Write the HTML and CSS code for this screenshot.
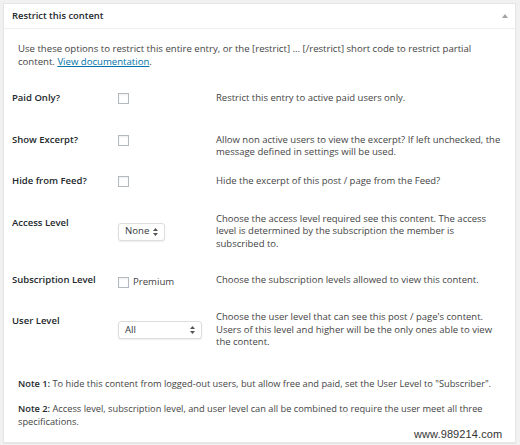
FILE: index.html
```html
<!DOCTYPE html>
<html>
<head>
<meta charset="utf-8">
<link rel="stylesheet" href="styles.css">
</head>
<body>
<div class="panel">
  <div class="panel-head">
    <h2 class="panel-title">Restrict this content</h2>
    <svg class="toggle" width="6" height="4" viewBox="0 0 6 4"><path d="M0 4 L3 0 L6 4 Z" fill="#a0a5aa"/></svg>
  </div>
  <div class="panel-body">
    <p class="intro">Use these options to restrict this entire entry, or the [restrict] ... [/restrict] short code to restrict partial content. <a href="#">View documentation</a>.</p>
    <div class="rows">
      <div class="row">
        <div class="label">Paid Only?</div>
        <div class="control"><span class="checkbox"></span></div>
        <div class="desc">Restrict this entry to active paid users only.</div>
      </div>
      <div class="row">
        <div class="label">Show Excerpt?</div>
        <div class="control"><span class="checkbox"></span></div>
        <div class="desc">Allow non active users to view the excerpt? If left unchecked, the message defined in settings will be used.</div>
      </div>
      <div class="row">
        <div class="label">Hide from Feed?</div>
        <div class="control"><span class="checkbox"></span></div>
        <div class="desc">Hide the excerpt of this post / page from the Feed?</div>
      </div>
      <div class="row row-select">
        <div class="label">Access Level</div>
        <div class="control"><div class="select select-none"><span>None</span><svg class="arrows" width="5" height="8" viewBox="0 0 5 8"><path d="M0 3 L2.5 0 L5 3 Z M0 5 L2.5 8 L5 5 Z" fill="#555"/></svg></div></div>
        <div class="desc desc-narrow">Choose the access level required see this content. The access level is determined by the subscription the member is subscribed to.</div>
      </div>
      <div class="row">
        <div class="label">Subscription Level</div>
        <div class="control control-inline"><span class="checkbox"></span><span class="opt">Premium</span></div>
        <div class="desc">Choose the subscription levels allowed to view this content.</div>
      </div>
      <div class="row row-select">
        <div class="label">User Level</div>
        <div class="control"><div class="select select-all"><span>All</span><svg class="arrows" width="5" height="8" viewBox="0 0 5 8"><path d="M0 3 L2.5 0 L5 3 Z M0 5 L2.5 8 L5 5 Z" fill="#555"/></svg></div></div>
        <div class="desc">Choose the user level that can see this post / page's content. Users of this level and higher will be the only ones able to view the content.</div>
      </div>
    </div>
    <p class="note"><strong>Note 1:</strong> To hide this content from logged-out users, but allow free and paid, set the User Level to "Subscriber".</p>
    <p class="note"><strong>Note 2:</strong> Access level, subscription level, and user level can all be combined to require the user meet all three specifications.</p>
  </div>
</div>
<div class="watermark">www.989214.com</div>
</body>
</html>
```
FILE: styles.css
```css
html, body {
  margin: 0;
  padding: 0;
}
body {
  background: #f1f1f1;
  font-family: "Open Sans", "Liberation Sans", sans-serif;
  font-size: 9.6px;
  line-height: 12.5px;
  color: #444;
  width: 520px;
  height: 445px;
  overflow: hidden;
  position: relative;
}
.panel {
  margin: 3px 4px 0 3px;
  height: 438px;
  background: #fff;
  border: 1px solid #e5e5e5;
  box-shadow: 0 1px 1px rgba(0,0,0,0.04);
}
.panel-head {
  height: 24px;
  border-bottom: 1px solid #eee;
  display: flex;
  align-items: center;
  justify-content: space-between;
  padding: 0 7px 0 8px;
}
.panel-title {
  margin: 0;
  font-size: 9.4px;
  font-weight: 600;
  color: #23282d;
}
.toggle {
  display: block;
  margin-top: -1px;
}
.panel-body {
  padding: 0 9px 0 0;
}
.intro {
  margin: 14px 4px 0 14px;
}
.intro a {
  color: #0073aa;
  text-decoration: underline;
}
.rows {
  margin-top: 24px;
  padding-left: 8px;
}
.row {
  display: grid;
  grid-template-columns: 106px 98px 1fr;
  align-items: start;
}
.label {
  font-weight: 600;
  font-size: 9.5px;
  color: #23282d;
  padding-bottom: 29px;
}
.control {
  padding-top: 1px;
}
.control-inline {
  display: flex;
  align-items: center;
  gap: 4px;
  padding-top: 3px;
}
.checkbox {
  display: block;
  width: 9px;
  height: 9px;
  border: 1px solid #b4b9be;
  background: #fff;
  box-shadow: inset 0 1px 2px rgba(0,0,0,0.07);
}
.opt {
  line-height: 10px;
}
.desc {
  font-size: 9.5px;
  padding-top: 0;
  padding-bottom: 15px;
}
.desc-narrow {
  padding-right: 17px;
}
.row-select .label {
  padding-bottom: 0;
}
.row-select .control {
  padding-top: 6px;
}
.row-select .desc {
  margin-top: -4px;
  padding-bottom: 23.5px;
}
.select {
  box-sizing: border-box;
  height: 18px;
  border: 1px solid #ddd;
  border-radius: 3px;
  background: #fff;
  box-shadow: 0 1px 2px rgba(0,0,0,0.07);
  display: flex;
  align-items: center;
  justify-content: space-between;
  padding: 0 6px 0 6px;
  color: #32373c;
}
.select-none {
  width: 47px;
}
.select-all {
  width: 84px;
}
.arrows {
  display: block;
}
.note {
  margin: 5px 4px 11px 14px;
  font-size: 9.25px;
  line-height: 13.5px;
}
.note strong {
  font-weight: 600;
  color: #23282d;
}
.watermark {
  position: absolute;
  left: 414px;
  top: 428px;
  font-family: "Liberation Sans", Arial, sans-serif;
  font-size: 11px;
  color: #333;
  letter-spacing: 0.1px;
}
```
